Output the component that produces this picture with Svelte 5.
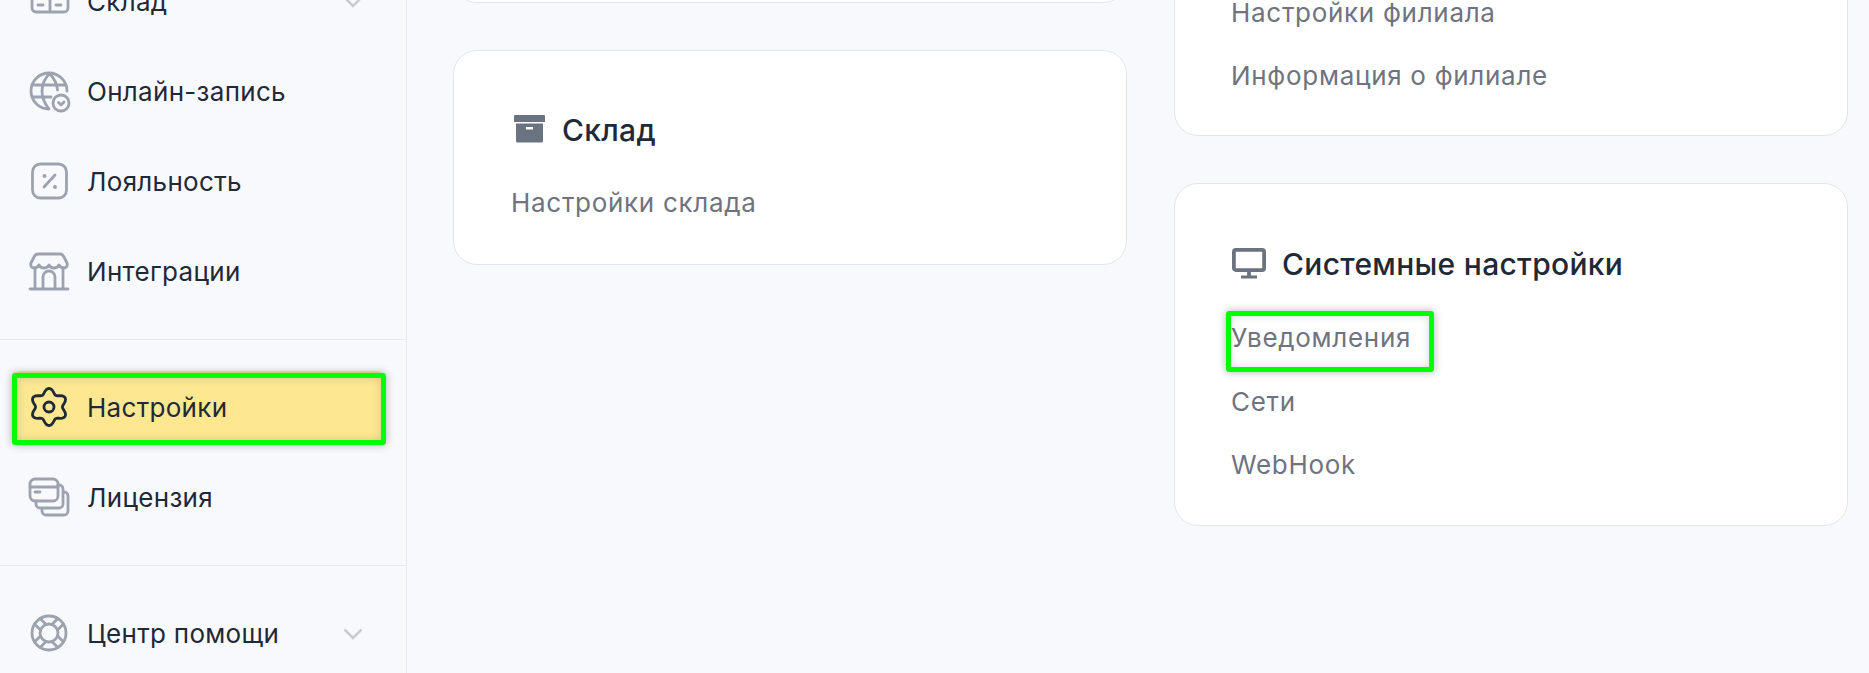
<script>
// six soft lobes for the settings gear, centre 18,18 in a 36 box
const gearPoints = [];
for (let deg = 0; deg < 360; deg += 5) {
	const a = (deg * Math.PI) / 180;
	const r = 16 + 2.6 * Math.cos(6 * (a + Math.PI / 2));
	gearPoints.push(`${(18 + r * Math.cos(a)).toFixed(2)} ${(18 + r * Math.sin(a)).toFixed(2)}`);
}
const gearPath = "M" + gearPoints.join("L") + "Z";

const topLinks = ["Настройки филиала", "Информация о филиале"];
const systemLinks = ["Уведомления", "Сети", "WebHook"];
</script>

<div class="page">
	<aside class="sidebar">
		<nav class="group first">
			<div class="item">
				<svg class="icon" viewBox="0 0 36 36">
					<path d="M1 6h33a3 3 0 0 1 3 3v16a4 4 0 0 1-4 4H5a4 4 0 0 1-4-4V6ZM19 6v23M7 22h5M25 22h5" />
				</svg>
				<span class="label">Склад</span>
				<svg class="chev" viewBox="0 0 20 12"><path d="M1.500 1.500 10 10l8.500-8.500" /></svg>
			</div>
			<div class="item">
				<svg class="icon" viewBox="0 0 36 36">
					<path d="M36 18a18 18 0 1 0-18 18M1 12h34M1 24h19M19 0c-5 5-8 11-8 18s3 13 7 18M18 0c5 5 8 11 8.500 17" />
					<circle cx="30" cy="30" r="8" />
					<path class="thick" d="M27.500 29.500 30 32l3-3" />
				</svg>
				<span class="label">Онлайн-запись</span>
			</div>
			<div class="item">
				<svg class="icon" viewBox="0 0 36 36">
					<rect x="1.500" y="1" width="34" height="34" rx="8" />
					<path d="m13 24 11-12" />
					<circle class="dot" cx="13.500" cy="13" r="2" />
					<circle class="dot" cx="24" cy="24" r="2" />
				</svg>
				<span class="label">Лояльность</span>
			</div>
			<div class="item">
				<svg class="icon wide" viewBox="0 0 40 36">
					<path d="M1 36h38M6 15v21M34 15v21M14 36V24a5.500 5.500 0 0 1 12 0v12" />
					<path d="M9 1h22c2 0 3 1 4 3l3 6c1 3-1 5-3 5-3 0-4-1-5-3-1 2-3 3-5 3s-4-1-5-3c-1 2-3 3-5 3s-4-1-5-3c-1 2-2 3-5 3-2 0-4-2-3-5l3-6c1-2 2-3 4-3Z" />
				</svg>
				<span class="label">Интеграции</span>
			</div>
		</nav>

		<nav class="group">
			<div class="item active">
				<svg class="icon" viewBox="0 0 36 36">
					<path d={gearPath} />
					<circle cx="18" cy="18" r="5" />
				</svg>
				<span class="label">Настройки</span>
				<span class="mark"></span>
			</div>
			<div class="item">
				<svg class="icon wide tall" viewBox="0 0 40 38">
					<rect x="1" y="1" width="28" height="22" rx="5" />
					<path d="M1 9h28M6 14h5M7 23v3a4 4 0 0 0 4 4h19a4 4 0 0 0 4-4V11a4 4 0 0 0-5-4M13 30v3a4 4 0 0 0 4 4h18a4 4 0 0 0 4-4V18a4 4 0 0 0-5-4" />
				</svg>
				<span class="label">Лицензия</span>
			</div>
		</nav>

		<nav class="group last">
			<div class="item">
				<svg class="icon" viewBox="0 0 36 36">
					<circle cx="18" cy="18" r="17" />
					<circle cx="18" cy="18" r="9" />
					<path d="M15.100 9.500 9.100 3.500M9.500 15.100 3.500 9.100M20.900 9.500l6-6M26.500 15.100l6-6M15.100 26.500l-6 6M9.500 20.900l-6 6M20.900 26.500l6 6M26.500 20.900l6 6" />
				</svg>
				<span class="label">Центр помощи</span>
				<svg class="chev" viewBox="0 0 20 12"><path d="M1.500 1.500 10 10l8.500-8.500" /></svg>
			</div>
		</nav>
	</aside>

	<main class="content">
		<div class="column">
			<section class="card stub"></section>
			<section class="card storage">
				<h3 class="title">
					<svg class="title-icon" viewBox="0 0 36 36">
						<path class="solid" d="M3 4a1 1 0 0 1 1-1h29a1 1 0 0 1 1 1v6H3ZM5 11.500h27V29a1.500 1.500 0 0 1-1.500 1.500h-24A1.500 1.500 0 0 1 5 29Zm10 3.500v2.500h7V15Z" fill-rule="evenodd" />
					</svg>
					Склад
				</h3>
				<ul class="links">
					<li>Настройки склада</li>
				</ul>
			</section>
		</div>

		<div class="column right">
			<section class="card clipped">
				<ul class="links">
					{#each topLinks as link}
						<li>{link}</li>
					{/each}
				</ul>
			</section>
			<section class="card system">
				<h3 class="title">
					<svg class="title-icon" viewBox="0 0 36 36">
						<rect class="outline" x="2.900" y="3.900" width="30.200" height="20.200" rx="2" />
						<path class="outline" d="M18 26v4" />
						<path class="outline base" d="M10 31h16" />
					</svg>
					Системные настройки
				</h3>
				<ul class="links">
					{#each systemLinks as link, i}
						<li>
							{link}
							{#if i === 0}<span class="mark text-mark"></span>{/if}
						</li>
					{/each}
				</ul>
			</section>
		</div>
	</main>
</div>

<style>
:global(body) {
	background: #f8f9fd;
	font-family: Inter, "Noto Sans", sans-serif;
}

.page {
	display: flex;
	height: 673px;
	overflow: hidden;
}

.sidebar {
	width: 406px;
	flex: none;
	border-right: 1px solid #e8eaf3;
	box-sizing: content-box;
}

.group {
	display: flex;
	flex-direction: column;
	gap: 18px;
	padding: 31px 0 32px;
	border-bottom: 1px solid #e8eaf3;
}

.group.first {
	margin-top: -35px;
	padding-top: 0;
}

.group.last {
	border-bottom: 0;
}

.item {
	position: relative;
	display: flex;
	align-items: center;
	gap: 20px;
	width: 373px;
	height: 72px;
	margin-left: 12px;
	padding: 0 22px 0 19px;
	box-sizing: border-box;
	border-radius: 8px;
	color: #1f2937;
	font-size: 26px;
	letter-spacing: 0.3px;
}

.item.active {
	background: #fde791;
}

.label {
	flex: 1;
}

.icon {
	width: 36px;
	height: 36px;
	flex: none;
	fill: none;
	stroke: #9ca3af;
	stroke-width: 2.8;
	stroke-linecap: round;
	stroke-linejoin: round;
	overflow: visible;
}

.icon.wide {
	width: 40px;
	margin: 0 -2px;
}

.icon.tall {
	height: 38px;
}

.active .icon {
	stroke: #1f2937;
}

.icon .dot {
	fill: #9ca3af;
	stroke: none;
}

.chev {
	width: 20px;
	height: 12px;
	margin-top: 1px;
	fill: none;
	stroke: #c9ccd3;
	stroke-width: 2.6;
}

.mark {
	position: absolute;
	left: 0;
	top: 2px;
	width: 374px;
	height: 72px;
	box-sizing: border-box;
	border: 5px solid #00ff00;
	border-radius: 3px;
	box-shadow: 0 0 8px rgba(0, 0, 0, 0.3), inset 0 0 8px rgba(0, 0, 0, 0.15);
}

.text-mark {
	left: -5px;
	top: -9px;
	width: 208px;
	height: 61px;
}

.content {
	flex: 1;
	display: flex;
	gap: 47px;
	padding: 0 21px 0 46px;
}

.column {
	flex: none;
	width: 674px;
	display: flex;
	flex-direction: column;
	gap: 47px;
}

.card {
	box-sizing: border-box;
	background: #fff;
	border: 1px solid #e3e5ee;
	border-radius: 24px;
	padding: 62px 57px 41px;
}

.right .card {
	padding-left: 56px;
}

.stub {
	height: 200px;
	margin-top: -197px;
	flex: none;
}

.storage {
	padding-top: 61px;
	padding-bottom: 43px;
}

.clipped {
	margin-top: -42.5px;
	padding-top: 36px;
}

.system {
	padding-bottom: 42px;
}

.title {
	display: flex;
	align-items: center;
	gap: 15px;
	height: 36px;
	margin: 0 0 37px;
	color: #1f2937;
	font-size: 30px;
	font-weight: 500;
	letter-spacing: 0.3px;
}

.system .title {
	margin-bottom: 38px;
}

.title-icon {
	width: 36px;
	height: 36px;
	flex: none;
}

.solid {
	fill: #6b7280;
}

.outline {
	fill: none;
	stroke: #6b7280;
	stroke-width: 3.8;
}

.outline.base {
	stroke-width: 3;
}

.links {
	display: flex;
	flex-direction: column;
	gap: 27.5px;
	margin: 0;
	padding: 0;
	list-style: none;
	color: #6f7380;
	font-size: 26px;
	letter-spacing: 0.7px;
}

.links li {
	position: relative;
	height: 36px;
	line-height: 36px;
}
</style>
